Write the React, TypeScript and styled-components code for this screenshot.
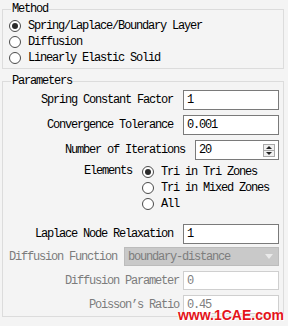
import styled, { createGlobalStyle } from 'styled-components';

const GlobalStyle = createGlobalStyle`
  html, body {
    margin: 0;
    padding: 0;
    background: #f4f4f4;
  }
`;

const Page = styled.div`
  position: relative;
  width: 288px;
  height: 326px;
  overflow: hidden;
  padding-top: 2px;
  box-sizing: border-box;
  background: #f4f4f4;
  font-family: "Liberation Mono", "Courier New", monospace;
  font-size: 12px;
  letter-spacing: -1.2px;
  color: #000;
`;

const Group = styled.fieldset<{ $top?: number }>`
  margin: ${(p) => p.$top ?? 0}px 4px 0 2px;
  padding: 2px 4px 2px 6px;
  border: 1px solid #dcdcdc;
  display: flex;
  flex-direction: column;
  min-width: 0;
  font: inherit;
`;

const Legend = styled.legend`
  margin-left: 2px;
  padding: 0 1px;
  line-height: 14px;
  height: 14px;
  font: inherit;
`;

const RadioList = styled.div<{ $width?: number }>`
  display: flex;
  flex-direction: column;
  width: ${(p) => (p.$width ? `${p.$width}px` : 'auto')};
`;

const RadioRow = styled.div`
  display: flex;
  align-items: center;
  height: 16px;
  white-space: pre;
`;

const Circle = styled.span<{ $on?: boolean }>`
  position: relative;
  width: 12px;
  height: 12px;
  box-sizing: border-box;
  border-radius: 50%;
  border: 1px solid #4a4a4a;
  background: #fff;
  margin-right: 7px;
  flex: none;
  &::after {
    content: '';
    display: ${(p) => (p.$on ? 'block' : 'none')};
    position: absolute;
    left: 2px;
    top: 2px;
    width: 6px;
    height: 6px;
    border-radius: 50%;
    background: #2a2a2a;
  }
`;

const Row = styled.div<{ $mt?: number; $h?: number }>`
  display: flex;
  justify-content: flex-end;
  align-items: center;
  height: ${(p) => p.$h ?? 20}px;
  margin-top: ${(p) => p.$mt ?? 0}px;
`;

const TopRow = styled(Row)`
  align-items: flex-start;
  height: auto;
`;

const Label = styled.span<{ $gap?: number; $off?: boolean }>`
  margin-right: ${(p) => p.$gap ?? 10}px;
  color: ${(p) => (p.$off ? '#7c7c7c' : '#000')};
  white-space: pre;
`;

const ElementsLabel = styled(Label)`
  line-height: 14px;
`;

const Field = styled.div<{ $width: number; $off?: boolean }>`
  display: flex;
  align-items: center;
  width: ${(p) => p.$width}px;
  height: 100%;
  box-sizing: border-box;
  border: 1px solid ${(p) => (p.$off ? '#cfcfcf' : '#7a7a7a')};
  background: #fff;
  padding-left: 3px;
  color: ${(p) => (p.$off ? '#808080' : '#000')};
`;

const FieldText = styled.span`
  flex: 1;
`;

const SpinBox = styled.div`
  display: flex;
  flex-direction: column;
  margin-right: 3px;
`;

const SpinButton = styled.div<{ $down?: boolean }>`
  width: 12px;
  height: 7px;
  box-sizing: border-box;
  border: 1px solid #a8a8a8;
  background: #f0f0f0;
  display: flex;
  align-items: center;
  justify-content: center;
  margin-top: ${(p) => (p.$down ? '-1px' : '0')};
  &::before {
    content: '';
    border-left: 3px solid transparent;
    border-right: 3px solid transparent;
    ${(p) => (p.$down ? 'border-top: 3px solid #222;' : 'border-bottom: 3px solid #222;')}
  }
`;

const Select = styled.div`
  display: flex;
  align-items: center;
  width: 156px;
  height: 100%;
  box-sizing: border-box;
  border: 1px solid #bcbcbc;
  background: #c9c9c9;
  padding: 0 5px 0 3px;
  color: #7d7d7d;
`;

const Arrow = styled.span`
  border-left: 4px solid transparent;
  border-right: 4px solid transparent;
  border-top: 5px solid #eaeaea;
`;

const Watermark = styled.div`
  position: absolute;
  right: 4px;
  bottom: 3px;
  font-family: "Liberation Sans", Arial, sans-serif;
  font-weight: bold;
  font-size: 14px;
  letter-spacing: 0;
  color: #e4141b;
  text-shadow: 1px 1px 0 #fff, -1px 0 0 #fff;
`;

type Opt = { text: string; on?: boolean };

const Radios = ({ items, width }: { items: Opt[]; width?: number }) => (
  <RadioList $width={width}>
    {items.map((it) => (
      <RadioRow key={it.text}>
        <Circle $on={it.on} />
        {it.text}
      </RadioRow>
    ))}
  </RadioList>
);

const App = () => {
  return (
    <Page>
      <GlobalStyle />
      <Group>
        <Legend>Method</Legend>
        <Radios
          items={[
            { text: 'Spring/Laplace/Boundary Layer', on: true },
            { text: 'Diffusion' },
            { text: 'Linearly Elastic Solid' },
          ]}
        />
      </Group>

      <Group $top={5}>
        <Legend>Parameters</Legend>
        <Row>
          <Label>Spring Constant Factor</Label>
          <Field $width={96}>1</Field>
        </Row>
        <Row $mt={5}>
          <Label>Convergence Tolerance</Label>
          <Field $width={96}>0.001</Field>
        </Row>
        <Row $mt={5}>
          <Label>Number of Iterations</Label>
          <Field $width={84}>
            <FieldText>20</FieldText>
            <SpinBox>
              <SpinButton />
              <SpinButton $down />
            </SpinBox>
          </Field>
        </Row>
        <TopRow $mt={4}>
          <ElementsLabel>Elements</ElementsLabel>
          <Radios
            width={137}
            items={[
              { text: 'Tri in Tri Zones', on: true },
              { text: 'Tri in Mixed Zones' },
              { text: 'All' },
            ]}
          />
        </TopRow>
        <Row $mt={12}>
          <Label>Laplace Node Relaxation</Label>
          <Field $width={96}>1</Field>
        </Row>
        <Row $mt={3} $h={19}>
          <Label $off $gap={7}>Diffusion Function</Label>
          <Select>
            <FieldText>boundary-distance</FieldText>
            <Arrow />
          </Select>
        </Row>
        <Row $mt={5} $h={19}>
          <Label $off $gap={4}>Diffusion Parameter</Label>
          <Field $width={96} $off>0</Field>
        </Row>
        <Row $mt={5} $h={19}>
          <Label $off $gap={4}>Poisson’s Ratio</Label>
          <Field $width={96} $off>0.45</Field>
        </Row>
      </Group>

      <Watermark>www.1CAE.com</Watermark>
    </Page>
  );
};

export default App;
